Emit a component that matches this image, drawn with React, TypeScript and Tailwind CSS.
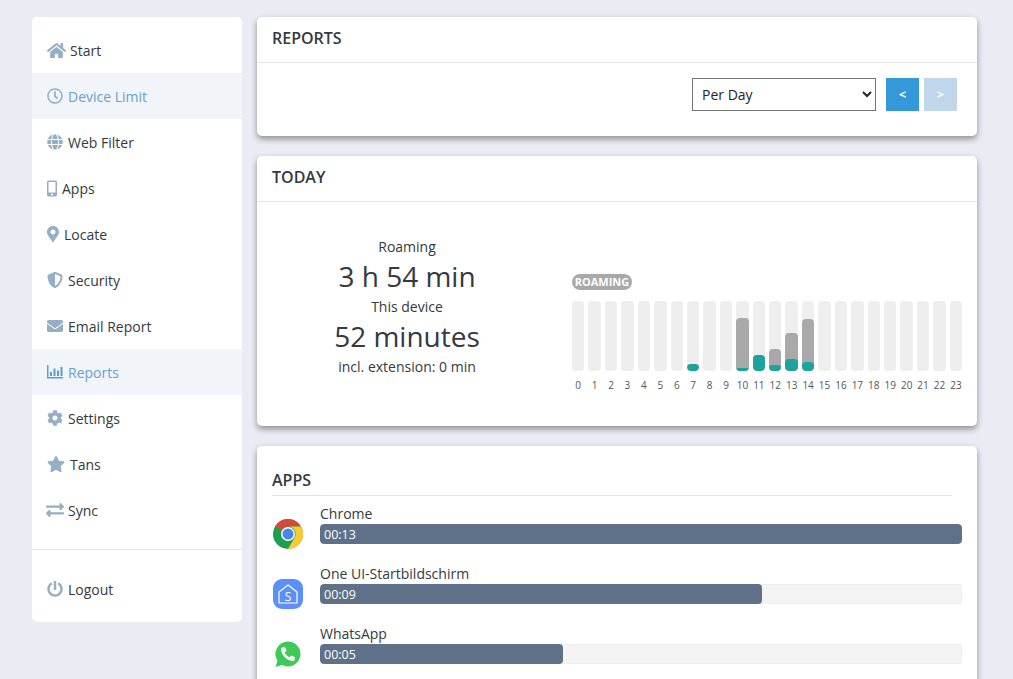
/**
 * Device report page: sidebar navigation plus report, today and apps cards
 */
import { ReactNode } from 'react';
import {
  FaHome,
  FaRegClock,
  FaGlobe,
  FaMobileAlt,
  FaMapMarkerAlt,
  FaShieldAlt,
  FaEnvelope,
  FaCog,
  FaStar,
  FaExchangeAlt,
  FaPowerOff,
  FaPhoneAlt,
} from 'react-icons/fa';

interface NavItem {
  label: string;
  icon: ReactNode;
  active?: boolean;
}

function BarChartIcon() {
  return (
    <svg viewBox="0 0 16 14" className="w-[16px] h-[14px] mr-[5px] text-[#5c9bd6]" fill="currentColor">
      <path d="M0 0h1.500v12H16v1.500H0z" />
      <path d="M3 7h2v4H3zM6.500 3.500h2V11h-2zM10 5.500h2V11h-2zM13.500 2h2v9h-2z" />
    </svg>
  );
}

const navItems: NavItem[] = [
  { label: 'Start', icon: <FaHome className="w-[19px] h-[17px] mr-[4px]" /> },
  { label: 'Device Limit', icon: <FaRegClock className="w-[16px] h-[16px] mr-[5px]" />, active: true },
  { label: 'Web Filter', icon: <FaGlobe className="w-[16px] h-[16px] mr-[5px]" /> },
  { label: 'Apps', icon: <FaMobileAlt className="w-[10px] h-[17px] mr-[5px]" /> },
  { label: 'Locate', icon: <FaMapMarkerAlt className="w-[12px] h-[16px] mr-[5px]" /> },
  { label: 'Security', icon: <FaShieldAlt className="w-[16px] h-[16px] mr-[5px]" /> },
  { label: 'Email Report', icon: <FaEnvelope className="w-[16px] h-[16px] mr-[5px]" /> },
  { label: 'Reports', icon: <BarChartIcon />, active: true },
  { label: 'Settings', icon: <FaCog className="w-[16px] h-[16px] mr-[5px]" /> },
  { label: 'Tans', icon: <FaStar className="w-[18px] h-[16px] mr-[5px]" /> },
  { label: 'Sync', icon: <FaExchangeAlt className="w-[18px] h-[18px] -ml-[1px] mr-[4px]" /> },
];

// roaming minutes and this-device minutes per hour, as a percent of the track
const hours = Array.from({ length: 24 }, (_, i) => i);
const roaming: Record<number, number> = { 10: 76, 12: 31, 13: 54, 14: 74 };
const device: Record<number, number> = { 7: 10, 10: 4, 11: 23, 12: 9, 13: 17, 14: 13 };

const apps = [
  { name: 'Chrome', time: '00:13', width: 100, icon: <ChromeIcon /> },
  { name: 'One UI-Startbildschirm', time: '00:09', width: 68.9, icon: <OneUiIcon /> },
  { name: 'WhatsApp', time: '00:05', width: 37.9, icon: <WhatsappIcon /> },
];

function ChromeIcon() {
  return (
    <svg viewBox="0 0 32 32" className="w-[32px] h-[32px]">
      <circle cx="16" cy="16" r="15" fill="#1f9e50" />
      <path d="M16 1a15 15 0 0 1 13 7.500H16a7.500 7.500 0 0 0-6.500 3.750L3 8.500A15 15 0 0 1 16 1z" fill="#d8483b" />
      <path d="M29 8.500A15 15 0 0 1 16 31l6.500-11.250A7.500 7.500 0 0 0 22.500 12 7.500 7.500 0 0 0 16 8.500z" fill="#fcc934" />
      <circle cx="16" cy="16" r="7" fill="#ffffff" />
      <circle cx="16" cy="16" r="5.500" fill="#4a85ec" />
    </svg>
  );
}

function OneUiIcon() {
  return (
    <svg viewBox="0 0 32 32" className="w-[32px] h-[32px]">
      <rect x="1" y="1" width="30" height="30" rx="9" fill="#5b8ff9" />
      <path d="M7 25V14l9-7 9 7v11z" fill="none" stroke="#ffffff" strokeWidth="1.200" strokeLinejoin="round" />
      <text x="16" y="22.500" textAnchor="middle" fontSize="12" fill="#ffffff" fontFamily="'Open Sans', sans-serif">
        S
      </text>
    </svg>
  );
}

function WhatsappIcon() {
  return (
    <span className="relative block w-[32px] h-[32px]">
      <svg viewBox="0 0 32 32" className="w-[32px] h-[32px]">
        <path d="M16 3.500a12.500 12.500 0 1 1-6 23.500L3.500 29l2-6.200A12.500 12.500 0 0 1 16 3.500z" fill="#3fc958" />
      </svg>
      <FaPhoneAlt className="absolute left-[9px] top-[9px] w-[14px] h-[14px] text-white" />
    </span>
  );
}

function CardHeader({ title }: { title: string }) {
  return (
    <div className="h-[46px] px-[15px] pb-[4px] flex items-center border-b border-[#e3e3e3]">
      <h2 className="text-[16px] font-semibold text-[#343a40] uppercase">{title}</h2>
    </div>
  );
}

export default function App() {
  return (
    <div className="h-screen overflow-hidden bg-[#e9ecf3] flex items-start pt-[17px] pl-[32px] gap-[15px] text-[14px] text-[#343a40] font-['Open_Sans',sans-serif]">
      <aside className="w-[210px] h-[605px] shrink-0 bg-white rounded-[5px] pt-[10px]">
        {navItems.map((item) => (
          <div
            key={item.label}
            className={`h-[46px] pl-[15px] flex items-center ${item.active ? 'bg-[#f1f4f8] text-[#6a9fd3]' : ''}`}
          >
            <span className="flex items-center text-[#97afc4]">{item.icon}</span>
            {item.label}
          </div>
        ))}
        <div className="mt-[16px] border-t border-[#e3e3e3] pt-[16px]">
          <div className="h-[46px] pl-[15px] flex items-center">
            <FaPowerOff className="w-[16px] h-[16px] mr-[5px] text-[#97afc4]" />
            Logout
          </div>
        </div>
      </aside>

      <main className="w-[720px] shrink-0 flex flex-col gap-[20px]">
        <section className="h-[119px] bg-white rounded-[5px] shadow-[0_3px_6px_rgba(0,0,0,0.4)]">
          <CardHeader title="Reports" />
          <div className="flex justify-end items-start pt-[15px] pr-[20px]">
            <select className="w-[184px] h-[33px] pl-[5px] bg-white border border-[#767676] text-[14px] text-[#212529]">
              <option>Per Day</option>
            </select>
            <button className="ml-[10px] w-[33px] h-[33px] bg-[#3498db] text-white text-[13px] font-bold">&lt;</button>
            <button className="ml-[5px] w-[33px] h-[33px] bg-[#c0d6ea] text-white text-[13px] font-bold">&gt;</button>
          </div>
        </section>

        <section className="h-[270px] bg-white rounded-[5px] shadow-[0_3px_6px_rgba(0,0,0,0.4)]">
          <CardHeader title="Today" />
          <div className="flex">
            <div className="w-[300px] pt-[35px] text-center">
              <div className="leading-[20px]">Roaming</div>
              <div className="text-[28px] leading-[38px] pb-[2px]">3 h 54 min</div>
              <div className="leading-[20px]">This device</div>
              <div className="text-[28px] leading-[38px] pb-[2px]">52 minutes</div>
              <div className="leading-[20px]">incl. extension: 0 min</div>
            </div>
            <div className="ml-[15px] w-[390px] pt-[72px]">
              <span className="block w-[60px] h-[16px] rounded-full bg-[#a9a9a9] text-white text-[11px] font-bold leading-[16px] text-center">
                ROAMING
              </span>
              <div className="flex gap-[4px] mt-[11px]">
                {hours.map((h) => (
                  <div key={h} className="flex-1 flex flex-col items-center">
                    <div className="relative w-full h-[70px] rounded-[4px] bg-[#eeeeee] overflow-hidden">
                      {roaming[h] && (
                        <div
                          className="absolute bottom-0 left-0 right-0 rounded-[4px] bg-[#a9a9a9]"
                          style={{ height: `${roaming[h]}%` }}
                        />
                      )}
                      {device[h] && (
                        <div
                          className="absolute bottom-0 left-0 right-0 rounded-[4px] bg-[#1ba39c]"
                          style={{ height: `${device[h]}%` }}
                        />
                      )}
                    </div>
                    <div className="mt-[6px] text-[10px] leading-[16px] text-[#555555]">{h}</div>
                  </div>
                ))}
              </div>
            </div>
          </div>
        </section>

        <section className="bg-white rounded-[5px] shadow-[0_3px_6px_rgba(0,0,0,0.4)] pt-[22px] px-[15px] pb-[20px]">
          <h2 className="w-[680px] h-[28px] text-[16px] font-semibold uppercase leading-[24px] border-b border-[#e3e3e3]">
            Apps
          </h2>
          <div className="mt-[8px] flex flex-col gap-[10px]">
            {apps.map((app) => (
              <div key={app.name} className="flex items-start h-[50px]">
                <div className="w-[32px] mt-[14px] shrink-0">{app.icon}</div>
                <div className="ml-[16px] flex-1">
                  <div className="h-[20px] leading-[20px] text-[#343a40]">{app.name}</div>
                  <div className="h-[20px] w-[642px] rounded-[4px] bg-[#f4f4f4] shadow-[inset_0_0_0_1px_#eeeeee] overflow-hidden">
                    <div
                      className="h-full bg-[#5f7189] rounded-[4px] text-white text-[12.500px] leading-[22px] pl-[4px]"
                      style={{ width: `${app.width}%` }}
                    >
                      {app.time}
                    </div>
                  </div>
                </div>
              </div>
            ))}
          </div>
        </section>
      </main>
    </div>
  );
}
